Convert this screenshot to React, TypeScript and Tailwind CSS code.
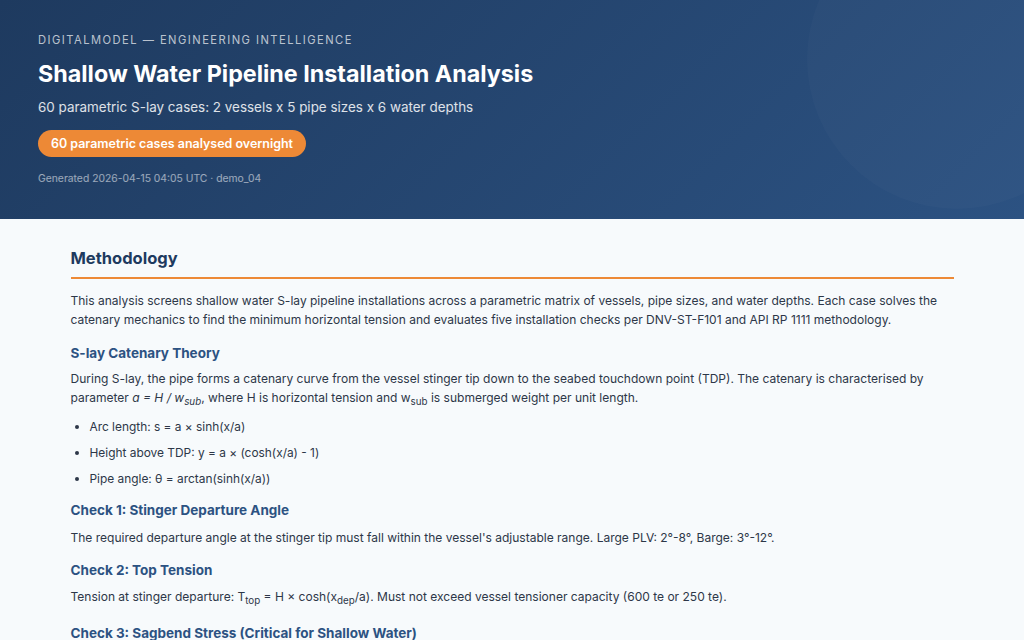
const subClass = "bottom-[-0.35em] text-[9.8px]";
const h3Class = "text-[13.5px] font-bold leading-[20px] text-[#2c5282]";
const bodyClass = "text-[12.03px] leading-[19px]";

export default function App() {
  return (
    <div className="min-h-[640px] h-[640px] overflow-hidden bg-[#f7fafc] font-['Inter',sans-serif] text-[#2d3748]">
      <header className="relative h-[219px] overflow-hidden bg-[linear-gradient(135deg,#1e3a5f_0%,#2c5282_100%)] px-[38px] pt-[32px] text-white">
        <div className="absolute right-[-83px] top-[-91px] h-[300px] w-[300px] rounded-full bg-white/[0.02]" />
        <p className="text-[11.2px] uppercase leading-[16px] tracking-[1.46px] text-white/70">DigitalModel — Engineering Intelligence</p>
        <h1 className="mt-[10px] text-[23.3px] font-bold leading-[32px]">Shallow Water Pipeline Installation Analysis</h1>
        <p className="mt-[7px] text-[13.44px] leading-[20px] text-white/85">60 parametric S-lay cases: 2 vessels x 5 pipe sizes x 6 water depths</p>
        <span className="mt-[13px] block w-fit rounded-full bg-[#ed8936] px-[13px] py-[6px] text-[12.46px] font-semibold leading-[15px]">60 parametric cases analysed overnight</span>
        <p className="mt-[13px] text-[10.35px] leading-[16px] text-white/55">Generated 2026-04-15 04:05 UTC · demo_04</p>
      </header>
      <main className="px-[70.5px] pt-[27px]">
        <h2 className="border-b-2 border-[#ed8936] pb-[6px] text-[16.5px] font-bold leading-[25px] text-[#1e3a5f]">Methodology</h2>
        <p className={`mt-[12px] ${bodyClass}`}>This analysis screens shallow water S-lay pipeline installations across a parametric matrix of vessels, pipe sizes, and water depths. Each case solves the catenary mechanics to find the minimum horizontal tension and evaluates five installation checks per DNV-ST-F101 and API RP 1111 methodology.</p>
        <h3 className={`mt-[14px] ${h3Class}`}>S-lay Catenary Theory</h3>
        <p className={`mt-[6px] ${bodyClass}`}>During S-lay, the pipe forms a catenary curve from the vessel stinger tip down to the seabed touchdown point (TDP). The catenary is characterised by parameter <em>a = H / w<sub className={subClass}>sub</sub></em>, where H is horizontal tension and w<sub className={subClass}>sub</sub> is submerged weight per unit length.</p>
        <ul className="mt-[10px] list-disc pl-[19px] text-[11.9px] leading-[19px]">
          <li>Arc length: s = a × sinh(x/a)</li>
          <li className="mt-[7px]">Height above TDP: y = a × (cosh(x/a) - 1)</li>
          <li className="mt-[7px]">Pipe angle: θ = arctan(sinh(x/a))</li>
        </ul>
        <h3 className={`mt-[12px] ${h3Class}`}>Check 1: Stinger Departure Angle</h3>
        <p className={`mt-[8px] ${bodyClass}`}>The required departure angle at the stinger tip must fall within the vessel's adjustable range. Large PLV: 2°-8°, Barge: 3°-12°.</p>
        <h3 className={`mt-[13px] ${h3Class}`}>Check 2: Top Tension</h3>
        <p className={`mt-[7px] ${bodyClass}`}>Tension at stinger departure: T<sub className={subClass}>top</sub> = H × cosh(x<sub className={subClass}>dep</sub>/a). Must not exceed vessel tensioner capacity (600 te or 250 te).</p>
        <h3 className="mt-[19px] text-[13.5px] font-bold leading-[16px] text-[#2c5282]">Check 3: Sagbend Stress (Critical for Shallow Water)</h3>
      </main>
    </div>
  );
}
